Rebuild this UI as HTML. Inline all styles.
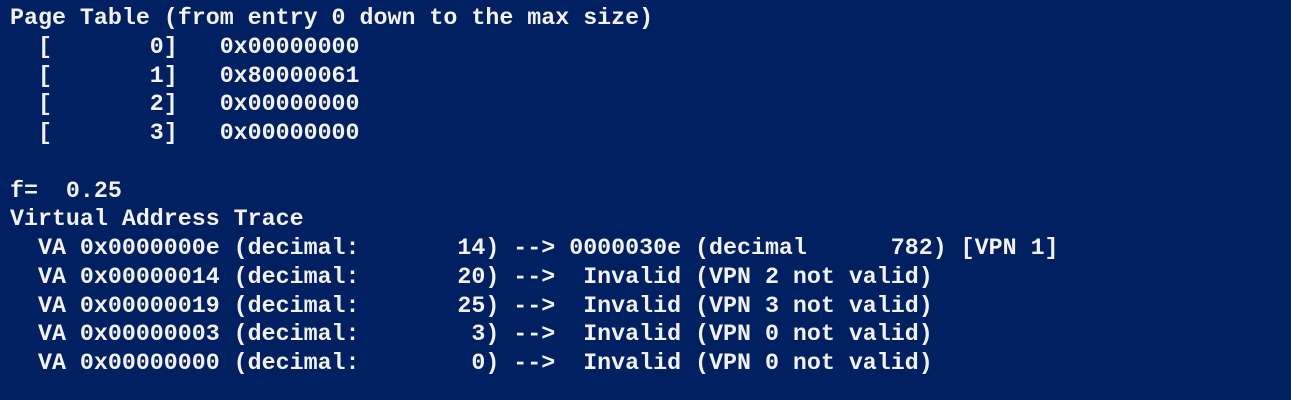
<!DOCTYPE html>
<html><head><style>
html,body{margin:0;padding:0;background:#012061;width:1291px;height:400px;overflow:hidden}
pre{margin:0;position:absolute;left:10px;top:4px;font-family:"Liberation Mono","DejaVu Sans Mono",monospace;font-size:23.3px;line-height:28.75px;color:#f2f2f2;font-weight:bold}
</style></head><body><pre>Page Table (from entry 0 down to the max size)
  [       0]   0x00000000
  [       1]   0x80000061
  [       2]   0x00000000
  [       3]   0x00000000

f=  0.25
Virtual Address Trace
  VA 0x0000000e (decimal:       14) --> 0000030e (decimal      782) [VPN 1]
  VA 0x00000014 (decimal:       20) -->  Invalid (VPN 2 not valid)
  VA 0x00000019 (decimal:       25) -->  Invalid (VPN 3 not valid)
  VA 0x00000003 (decimal:        3) -->  Invalid (VPN 0 not valid)
  VA 0x00000000 (decimal:        0) -->  Invalid (VPN 0 not valid)
</pre></body></html>
